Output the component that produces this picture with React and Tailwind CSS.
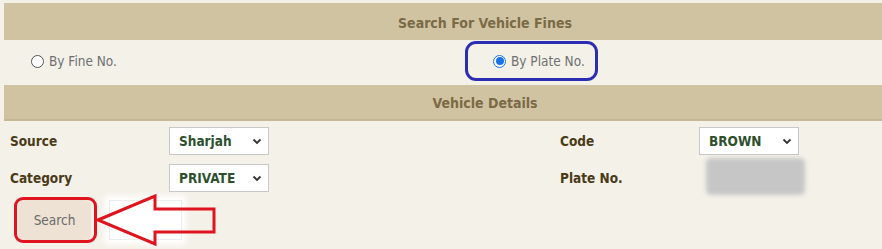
import React from "react";

const font = { fontFamily: "Tahoma, 'DejaVu Sans Condensed', 'DejaVu Sans', sans-serif" };

function Chevron() {
  return (
    <svg width="10" height="7" viewBox="0 0 10 7" className="absolute right-[6px] top-[10px]">
      <path d="M1.5 1.5 L5 5 L8.5 1.5" fill="none" stroke="#333" strokeWidth="1.8" />
    </svg>
  );
}

function Select({ value }) {
  return (
    <div className="relative w-[100px] h-[28px] bg-white border border-[#c8c8c8] pl-[9px] flex items-center text-[13.5px] font-bold text-[#2e4f2e]">
      {value}
      <Chevron />
    </div>
  );
}

function Radio({ checked }) {
  if (checked)
    return (
      <span className="w-[13px] h-[13px] rounded-full border border-[#1a73e8] bg-white flex items-center justify-center">
        <span className="w-[8px] h-[8px] rounded-full bg-[#1a73e8]" />
      </span>
    );
  return <span className="w-[13px] h-[13px] rounded-full border border-[#555] bg-white" />;
}

export default function App() {
  return (
    <div className="w-[882px] h-[249px] overflow-hidden bg-[#f4f1e9] relative" style={font}>
      <div className="h-[3px] bg-[#f3f1e4]" />
      <div className="ml-[4px] w-[962px]">
        <div className="h-[37px] pt-[3px] bg-[#d0c3a2] flex items-center justify-center text-[14px] font-bold text-[#7a6a45]">
          Search For Vehicle Fines
        </div>
        <div className="h-[45px] bg-[#f4f1e9] relative">
          <div className="absolute left-[27px] top-[11px] flex items-center gap-[5px] text-[13.5px] text-[#707070]">
            <Radio /> <span>By Fine No.</span>
          </div>
          <div className="absolute left-[489px] top-[11px] flex items-center gap-[5px] text-[13.5px] text-[#707070]">
            <Radio checked /> <span>By Plate No.</span>
          </div>
        </div>
        <div className="h-[36px] pt-[3px] bg-[#d0c3a2] border-b-[2px] border-[#c6b894] flex items-center justify-center text-[14px] font-bold text-[#7a6a45]">
          Vehicle Details
        </div>
      </div>
      <div className="pt-[6px] pl-[10px] grid grid-cols-[159px_391px_139px_120px] grid-rows-[28px_28px] gap-y-[9px] items-center text-[13.5px] font-bold text-[#4a3b17]">
        <div>Source</div>
        <Select value="Sharjah" />
        <div>Code</div>
        <Select value="BROWN" />
        <div>Category</div>
        <Select value="PRIVATE" />
        <div>Plate No.</div>
        <div className="relative h-[28px]">
          <div className="absolute left-[7px] top-[-6px] w-[99px] h-[37px] rounded-[5px] bg-[#c6c6c6] blur-[2px]" />
        </div>
      </div>
      <div className="mt-[8px] ml-[18px] flex items-start gap-[18px]">
        <div className="w-[73px] h-[40px] rounded-[6px] bg-[#ede2d3] flex items-center justify-center text-[13.5px] text-[#6a6a6a]">
          Search
        </div>
        <div className="w-[73px] h-[40px] bg-white border border-[#ececec] shadow-[0_0_6px_4px_#ffffff]" />
      </div>

      {/* blue highlight */}
      <div className="absolute left-[465px] top-[41px] w-[133px] h-[40px] rounded-[11px] border-[3px] border-[#2d2db4]" />
      {/* red highlight */}
      <div className="absolute left-[14px] top-[197px] w-[83px] h-[46px] rounded-[9px] border-[3px] border-[#e0141e]" />
      <svg className="absolute left-0 top-0" width="882" height="249" viewBox="0 0 882 249">
        <path
          d="M98 220 L155 196 L155 209 L214 209 L214 232 L155 232 L155 244 Z"
          fill="none"
          stroke="#e0141e"
          strokeWidth="3"
          strokeLinejoin="miter"
        />
      </svg>
    </div>
  );
}
